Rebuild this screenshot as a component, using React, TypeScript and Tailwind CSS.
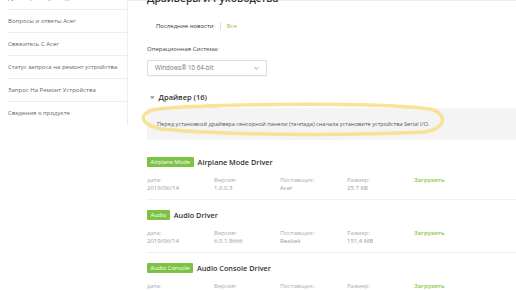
import React from 'react'
import { ChevronDown } from 'lucide-react'

const sideLinks = [
  'Драйверы и Руководства',
  'Вопросы и ответы Acer',
  'Свяжитесь С Acer',
  'Статус запроса на ремонт устройства',
  'Запрос На Ремонт Устройства',
  'Сведения о продукте',
]

interface Driver {
  tag: string
  name: string
  date: string
  version: string
  vendor: string
  size: string
}

const drivers: Driver[] = [
  { tag: 'Airplane Mode', name: 'Airplane Mode Driver', date: '2019/06/14', version: '1.0.0.3', vendor: 'Acer', size: '25.7 KB' },
  { tag: 'Audio', name: 'Audio Driver', date: '2019/06/14', version: '6.0.1.8666', vendor: 'Realtek', size: '151.4 MB' },
  { tag: 'Audio Console', name: 'Audio Console Driver', date: '2019/06/14', version: '1.0.0.12', vendor: 'Realtek', size: '3.2 MB' },
]

const DriverRow: React.FC<{ d: Driver }> = ({ d }) => (
  <div className="pt-[10px] pb-[7px] border-b border-[#f0f0f0]">
    <div className="flex items-center h-[10px]">
      <span className="h-[10px] px-[3.5px] rounded-[1px] bg-[#7cc243] text-white text-[5.8px] leading-[10px]">
        {d.tag}
      </span>
      <span className="ml-[4px] text-[7.3px] font-semibold text-[#333] leading-[10px]">{d.name}</span>
    </div>
    <div className="mt-[9px] grid grid-cols-[67px_66px_67px_67px_auto] text-[6px] leading-[8px] text-[#aaa]">
      <span>дата:</span>
      <span>Версия:</span>
      <span>Поставщик:</span>
      <span>Размер:</span>
      <span className="text-[#8dc63f] font-semibold">Загрузить</span>
    </div>
    <div className="grid grid-cols-[67px_66px_67px_67px_auto] text-[6px] leading-[8px] text-[#999]">
      <span>{d.date}</span>
      <span>{d.version}</span>
      <span>{d.vendor}</span>
      <span>{d.size}</span>
      <span />
    </div>
  </div>
)

export default function App() {
  return (
    <div className="relative w-[516px] h-[290px] overflow-hidden bg-white font-['Open_Sans',sans-serif]">
      <div className="flex">
        {/* Sidebar */}
        <aside className="w-[128px] shrink-0 pl-[7px] -mt-[13px]">
          <div className="border-r border-[#eee]">
            {sideLinks.map((l, i) => (
              <div
                key={l}
                className={`h-[23px] flex items-center pl-[1px] text-[6px] text-[#666] ${
                  i < sideLinks.length - 1 ? 'border-b border-[#eee]' : ''
                }`}
              >
                {l}
              </div>
            ))}
          </div>
        </aside>

        {/* Main */}
        <main className="flex-1 border-t border-[#eee] pl-[19px]">
          <h1 className="-mt-[10px] h-[14px] leading-[14px] text-[10.3px] font-semibold text-[#333]">
            Драйверы и Руководства
          </h1>

          <div className="mt-[16px] flex items-center h-[10px] pl-[9px] text-[6px]">
            <span className="text-[#333]">Последние новости</span>
            <span className="mx-[6px] w-px h-[8px] bg-[#ddd]" />
            <span className="text-[#8dc63f]">Все</span>
          </div>

          <div className="mt-[14px] h-[8px] leading-[8px] text-[6px] text-[#444]">Операционная Система:</div>

          <div className="mt-[7px] w-[120px] h-[16px] border border-[#ddd] rounded-[1px] flex items-center justify-between pl-[7px] pr-[6px] shadow-[0_1px_1px_rgba(0,0,0,0.04)]">
            <span className="text-[6.2px] text-[#777]">Windows® 10 64-bit</span>
            <ChevronDown size={7} strokeWidth={2} className="text-[#666]" />
          </div>

          <div className="mt-[16px] flex items-center h-[10px] pl-[3px]">
            <span className="text-[8px] text-[#555] leading-[10px]">×</span>
            <span className="ml-[4px] text-[7.5px] font-semibold text-[#333] leading-[10px]">Драйвер (16)</span>
          </div>

          <div className="mt-[6px] h-[32px] bg-[#f4f4f4] flex items-center pl-[10px] text-[5.65px] text-[#555]">
            Перед установкой драйвера сенсорной панели (тачпада) сначала установите устройства Serial I/O.
          </div>

          <div className="mt-[7px]">
            {drivers.map((d) => (
              <DriverRow key={d.tag} d={d} />
            ))}
          </div>
        </main>
      </div>

      {/* hand-drawn highlight */}
      <svg className="absolute inset-0 pointer-events-none" width="516" height="290">
        <path
          d="M205 106 C 300 103, 395 104, 430 109 C 447 113, 448 128, 424 132 C 340 136, 220 135, 162 129 C 139 125, 137 112, 158 109 C 175 107, 192 106, 220 106"
          fill="none"
          stroke="#f6df86"
          strokeOpacity="0.85"
          strokeWidth="3.5"
          strokeLinecap="round"
        />
      </svg>
    </div>
  )
}
